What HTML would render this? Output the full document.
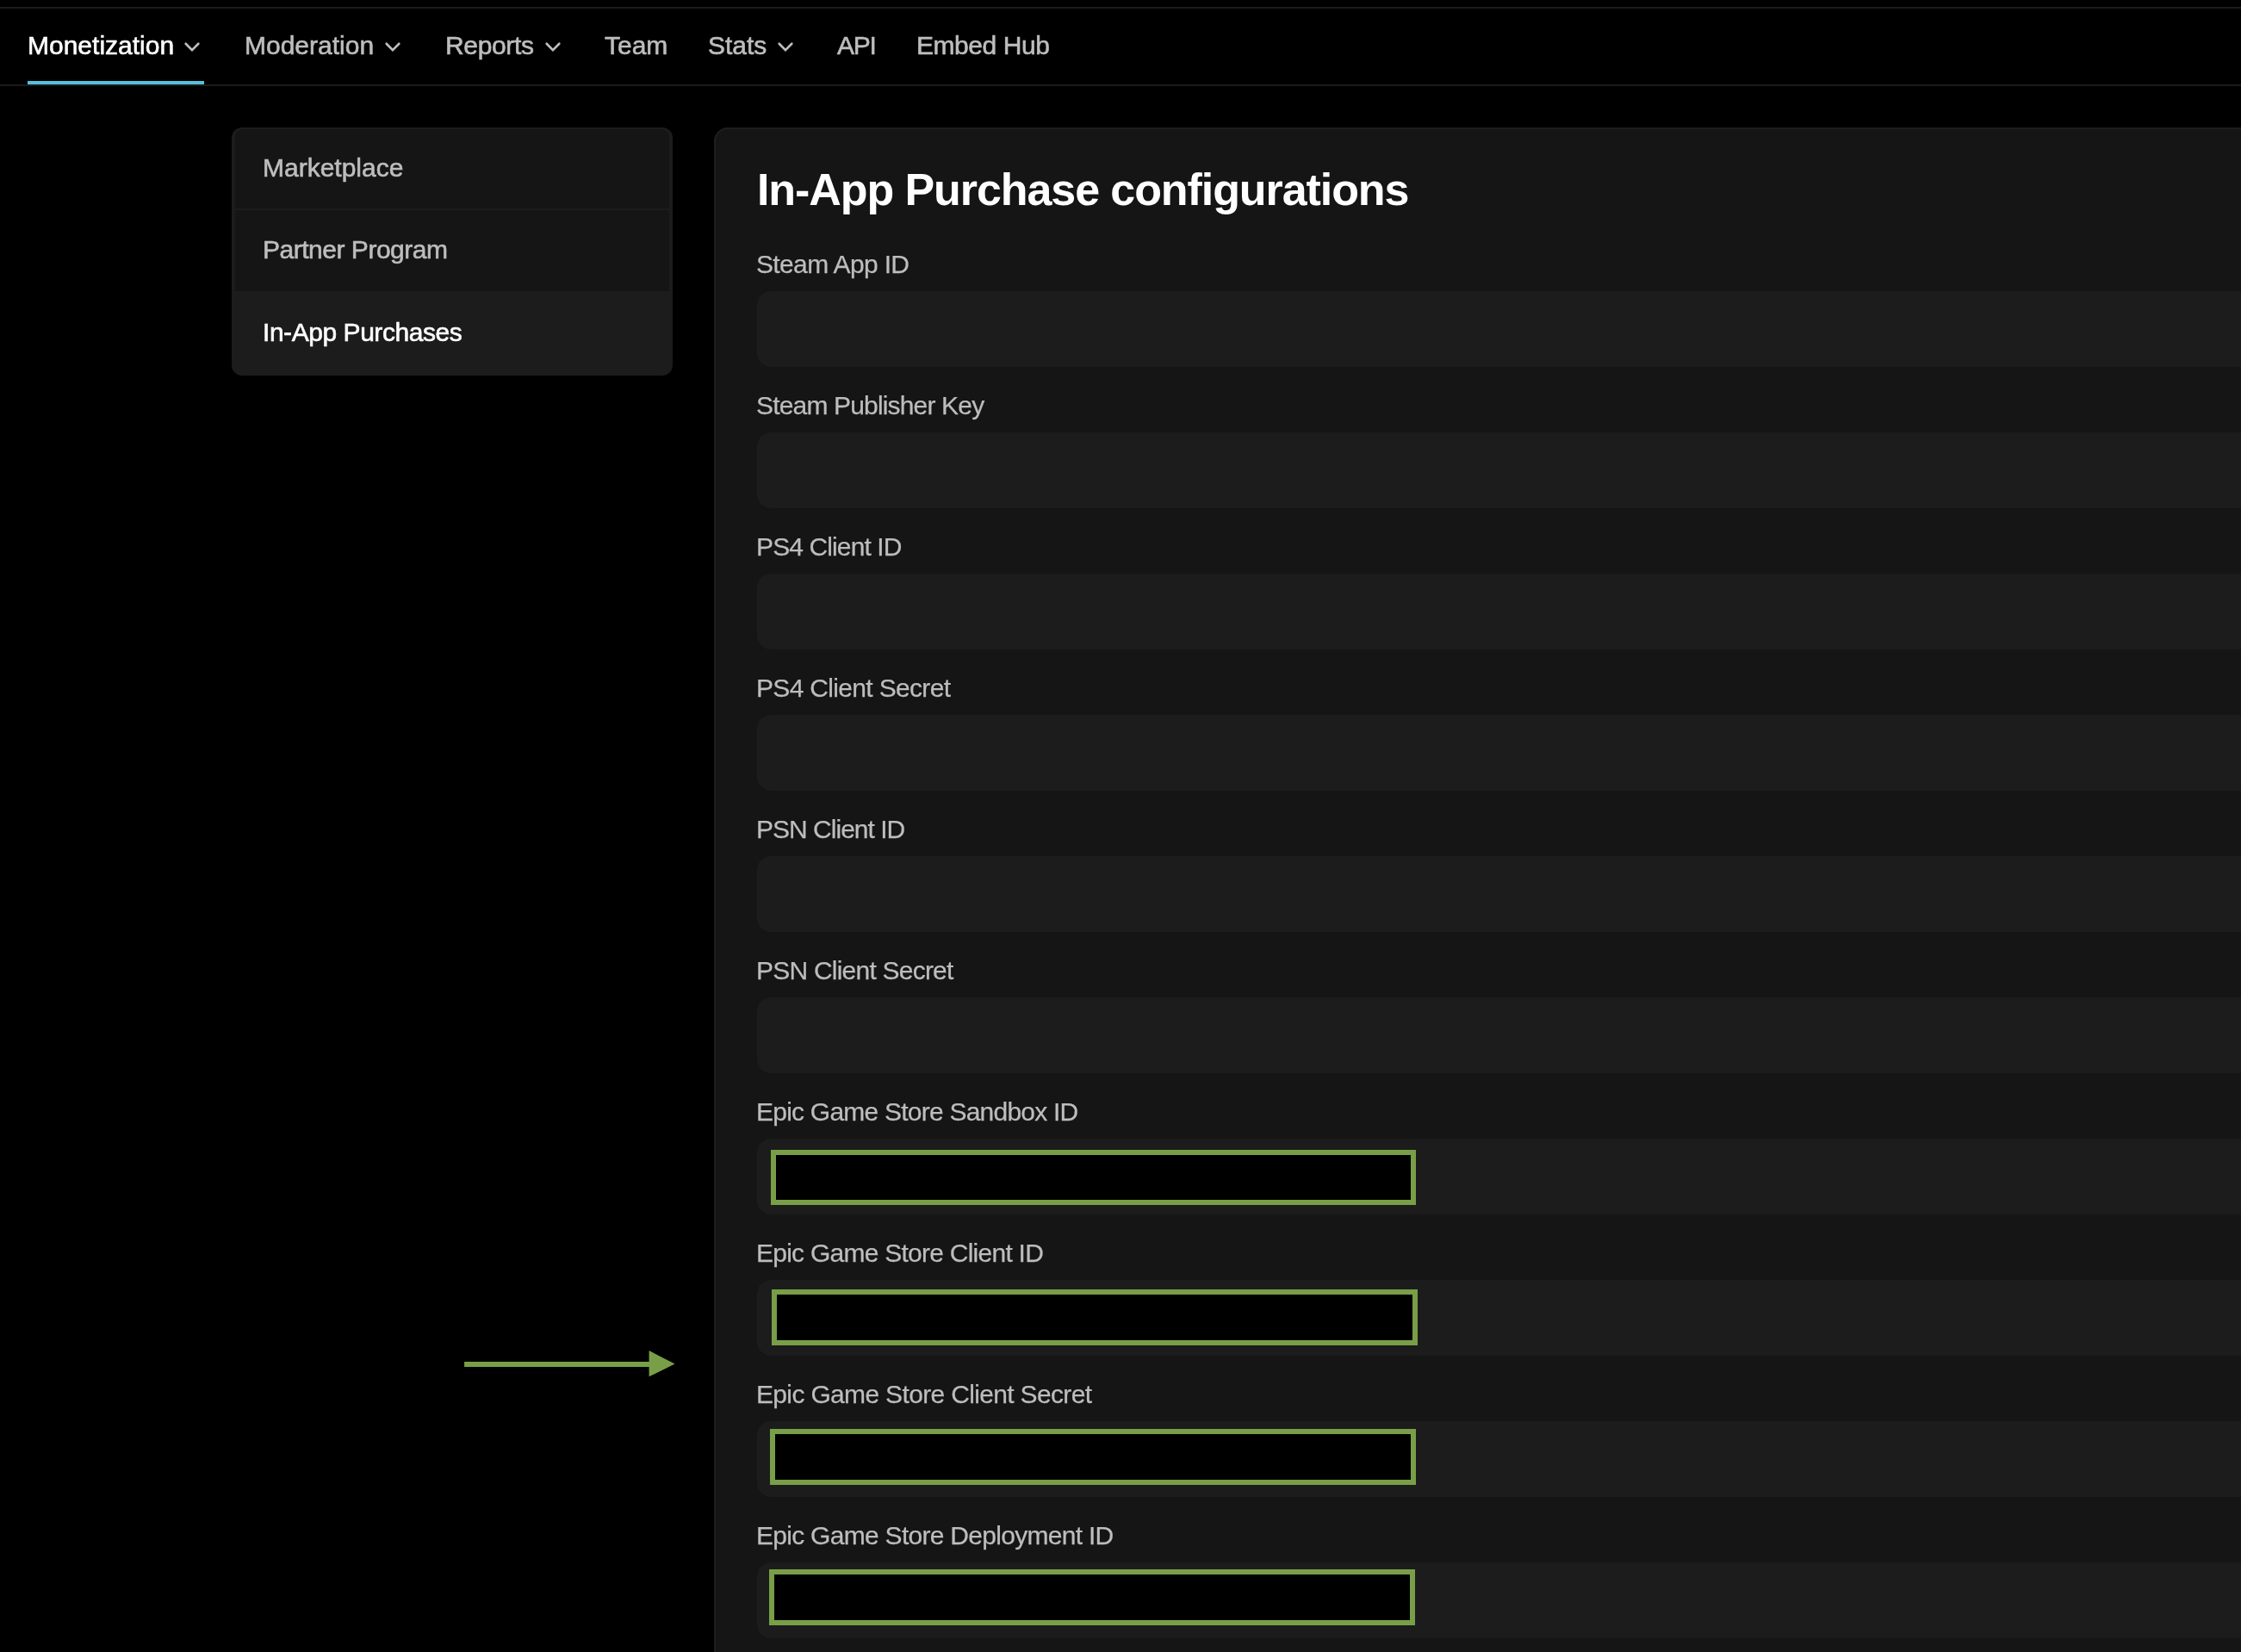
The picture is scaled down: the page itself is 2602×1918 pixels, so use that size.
<!DOCTYPE html>
<html><head><meta charset="utf-8">
<style>
html,body{margin:0;padding:0;background:#000;}
body{width:2602px;height:1918px;position:relative;overflow:hidden;font-family:"Liberation Sans",sans-serif;}
.a{position:absolute;}
.nav,.side,.title,.lbl{will-change:transform;}
.topline{left:0;top:8px;width:2602px;height:2px;background:#1b1b1b;}
.navline{left:0;top:98px;width:2602px;height:2px;background:#1b1b1b;}
.uline{left:32px;top:94px;width:205px;height:4px;background:#56bfdb;}
.nav{font-size:30px;line-height:30px;color:#bdbdbd;white-space:nowrap;-webkit-text-stroke:0.6px #bdbdbd;}
.nav.on{color:#fff;-webkit-text-stroke:0.6px #fff;}
.chev{width:20px;height:14px;}
.card{left:269px;top:148px;width:512px;height:288px;background:#1c1c1c;border-radius:12px;overflow:hidden;}
.item{position:absolute;left:4px;width:504px;background:#151515;}
.side{font-size:30px;line-height:30px;color:#bdbdbd;white-space:nowrap;-webkit-text-stroke:0.6px #bdbdbd;}
.side.on{color:#fff;-webkit-text-stroke:0.6px #fff;}
.panel{left:829px;top:148px;width:1900px;height:1900px;background:#151515;border:2px solid #1e1e1e;border-radius:16px;box-sizing:border-box;}
.title{font-size:52px;line-height:52px;font-weight:bold;color:#fff;white-space:nowrap;letter-spacing:-1.08px;}
.lbl{font-size:30px;line-height:30px;color:#bdbdbd;white-space:nowrap;-webkit-text-stroke:0.25px #bdbdbd;}
.inp{left:879px;width:1800px;height:88px;background:#1c1c1c;border-radius:16px;}
.gbox{background:#000;border:6px solid #789f47;box-sizing:border-box;}
</style></head><body>
<div class="a topline"></div>
<div class="a navline"></div>
<div class="a uline"></div>

<div class="a nav on" style="left:32px;top:38px;">Monetization</div>
<svg class="a chev" style="left:213px;top:47px;" viewBox="0 0 20 14"><path d="M2.7 3.8 L10 11.1 L17.3 3.8" fill="none" stroke="#bdbdbd" stroke-width="2.7" stroke-linecap="round"/></svg>
<div class="a nav" style="left:284px;top:38px;">Moderation</div>
<svg class="a chev" style="left:446px;top:47px;" viewBox="0 0 20 14"><path d="M2.7 3.8 L10 11.1 L17.3 3.8" fill="none" stroke="#bdbdbd" stroke-width="2.7" stroke-linecap="round"/></svg>
<div class="a nav" style="left:517px;top:38px;letter-spacing:-0.35px;">Reports</div>
<svg class="a chev" style="left:632px;top:47px;" viewBox="0 0 20 14"><path d="M2.7 3.8 L10 11.1 L17.3 3.8" fill="none" stroke="#bdbdbd" stroke-width="2.7" stroke-linecap="round"/></svg>
<div class="a nav" style="left:702px;top:38px;">Team</div>
<div class="a nav" style="left:822px;top:38px;">Stats</div>
<svg class="a chev" style="left:902px;top:47px;" viewBox="0 0 20 14"><path d="M2.7 3.8 L10 11.1 L17.3 3.8" fill="none" stroke="#bdbdbd" stroke-width="2.7" stroke-linecap="round"/></svg>
<div class="a nav" style="left:972px;top:38px;letter-spacing:-1.2px;">API</div>
<div class="a nav" style="left:1064px;top:38px;letter-spacing:-0.45px;">Embed Hub</div>

<div class="a card">
  <div class="item" style="top:2px;height:92px;border-radius:9px 9px 0 0;"></div>
  <div class="item" style="top:96px;height:94px;"></div>
</div>
<div class="a side" style="left:305px;top:180px;">Marketplace</div>
<div class="a side" style="left:305px;top:275px;letter-spacing:-0.48px;">Partner Program</div>
<div class="a side on" style="left:305px;top:371px;letter-spacing:-0.45px;">In-App Purchases</div>

<div class="a panel"></div>
<div class="a title" style="left:879px;top:194px;">In-App Purchase configurations</div>

<!-- fields -->
<div class="a lbl" style="left:878px;top:292px;letter-spacing:-0.645px;">Steam App ID</div>
<div class="a inp" style="top:338px;"></div>
<div class="a lbl" style="left:878px;top:456px;letter-spacing:-0.833px;">Steam Publisher Key</div>
<div class="a inp" style="top:502px;"></div>
<div class="a lbl" style="left:878px;top:620px;letter-spacing:-0.883px;">PS4 Client ID</div>
<div class="a inp" style="top:666px;"></div>
<div class="a lbl" style="left:878px;top:784px;letter-spacing:-0.675px;">PS4 Client Secret</div>
<div class="a inp" style="top:830px;"></div>
<div class="a lbl" style="left:878px;top:948px;letter-spacing:-0.983px;">PSN Client ID</div>
<div class="a inp" style="top:994px;"></div>
<div class="a lbl" style="left:878px;top:1112px;letter-spacing:-0.775px;">PSN Client Secret</div>
<div class="a inp" style="top:1158px;"></div>
<div class="a lbl" style="left:878px;top:1276px;letter-spacing:-0.772px;">Epic Game Store Sandbox ID</div>
<div class="a inp" style="top:1322px;"></div>
<div class="a lbl" style="left:878px;top:1440px;letter-spacing:-0.75px;">Epic Game Store Client ID</div>
<div class="a inp" style="top:1486px;"></div>
<div class="a lbl" style="left:878px;top:1604px;letter-spacing:-0.661px;">Epic Game Store Client Secret</div>
<div class="a inp" style="top:1650px;"></div>
<div class="a lbl" style="left:878px;top:1768px;letter-spacing:-0.714px;">Epic Game Store Deployment ID</div>
<div class="a inp" style="top:1814px;"></div>

<div class="a gbox" style="left:895px;top:1335px;width:749px;height:64px;"></div>
<div class="a gbox" style="left:896px;top:1497px;width:750px;height:65px;"></div>
<div class="a gbox" style="left:894px;top:1659px;width:750px;height:65px;"></div>
<div class="a gbox" style="left:893px;top:1822px;width:750px;height:65px;"></div>

<svg class="a" style="left:530px;top:1560px;" width="260" height="50" viewBox="0 0 260 50">
  <rect x="9.1" y="21" width="216" height="6" fill="#789f47"/>
  <path d="M223.6 8.1 L253.6 23.4 L223.6 38.3 Z" fill="#789f47"/>
</svg>
</body></html>
